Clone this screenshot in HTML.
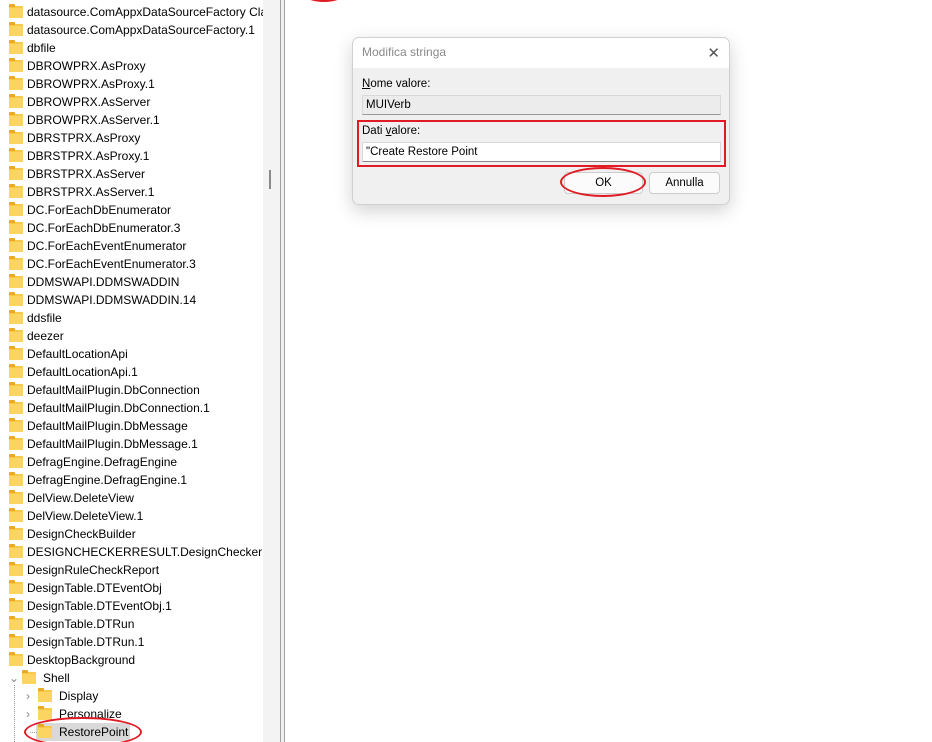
<!DOCTYPE html>
<html><head><meta charset="utf-8"><style>
*{margin:0;padding:0;box-sizing:border-box}
body{width:932px;height:742px;overflow:hidden;background:#fff;font-family:"Liberation Sans",sans-serif;font-size:12px;color:#000;position:relative}
.r{position:absolute;left:0;height:18px;line-height:18px;white-space:nowrap}
.f{position:absolute;top:3px;width:14px;height:12px;background:#f8c84a;border-radius:1px}
.f:before{content:"";position:absolute;left:0;top:-2px;width:6px;height:3px;background:#e9a825;border-radius:1px 1px 0 0}
.f:after{content:"";position:absolute;left:0;top:2px;width:14px;height:10px;background:#fcd462;border-radius:1px}
.t{position:absolute;top:0}
.chev{position:absolute;top:0;color:#888;font-size:12px}
#dlg{font-size:11.5px}
</style></head><body>
<div style="position:absolute;left:0;top:0;width:263px;height:742px;overflow:hidden" id="tree">
</div>
<div style="position:absolute;left:263px;top:0;width:17px;height:742px;background:#f3f3f3"></div>
<div style="position:absolute;left:269px;top:170px;width:2px;height:19px;background:#8a8a8a"></div>
<div style="position:absolute;left:280px;top:0;width:1px;height:742px;background:#a0a0a0"></div>
<div style="position:absolute;left:281px;top:0;width:3px;height:742px;background:#f0f0f0"></div>
<div style="position:absolute;left:284px;top:0;width:1px;height:742px;background:#a0a0a0"></div>
<div style="position:absolute;left:306px;top:-10px;width:36px;height:12px;border:2px solid #e01b24;border-radius:50%"></div>

<div id="dlg" style="position:absolute;left:352px;top:37px;width:378px;height:168px;background:#f0f0f0;border:1px solid #d0d0d0;border-radius:7px;box-shadow:0 6px 18px rgba(0,0,0,.18);overflow:hidden">
 <div style="height:30px;background:#fff;color:#8a8a8a;font-size:12px;line-height:28px;padding-left:9px">Modifica stringa</div>
 <div style="position:absolute;right:9px;top:6px;color:#555;font-size:15px">✕</div>
 <div style="position:absolute;left:9px;top:40px"><u>N</u>ome valore:</div>
 <div style="position:absolute;left:9px;top:57px;width:359px;height:20px;background:#ececec;border:1px solid #d8d8d8;border-bottom-color:#999;line-height:18px;padding-left:3px">MUIVerb</div>
 <div style="position:absolute;left:4px;top:82px;width:369px;height:47px;border:2px solid #e01b24"></div>
 <div style="position:absolute;left:9px;top:87px">Dati <u>v</u>alore:</div>
 <div style="position:absolute;left:9px;top:104px;width:359px;height:20px;background:#fff;border:1px solid #d8d8d8;border-bottom-color:#888;line-height:18px;padding-left:3px">"Create Restore Point</div>
 <div style="position:absolute;left:211px;top:134px;width:79px;height:22px;background:#fbfbfb;border:1px solid #ccc;border-radius:4px;text-align:center;line-height:20px">OK</div>
 <div style="position:absolute;left:296px;top:134px;width:71px;height:22px;background:#fbfbfb;border:1px solid #ccc;border-radius:4px;text-align:center;line-height:20px">Annulla</div>
 <div style="position:absolute;left:207px;top:129px;width:86px;height:30px;border:2px solid #e01b24;border-radius:50%"></div>
</div>

<script>
var items=["datasource.ComAppxDataSourceFactory Class","datasource.ComAppxDataSourceFactory.1","dbfile","DBROWPRX.AsProxy","DBROWPRX.AsProxy.1","DBROWPRX.AsServer","DBROWPRX.AsServer.1","DBRSTPRX.AsProxy","DBRSTPRX.AsProxy.1","DBRSTPRX.AsServer","DBRSTPRX.AsServer.1","DC.ForEachDbEnumerator","DC.ForEachDbEnumerator.3","DC.ForEachEventEnumerator","DC.ForEachEventEnumerator.3","DDMSWAPI.DDMSWADDIN","DDMSWAPI.DDMSWADDIN.14","ddsfile","deezer","DefaultLocationApi","DefaultLocationApi.1","DefaultMailPlugin.DbConnection","DefaultMailPlugin.DbConnection.1","DefaultMailPlugin.DbMessage","DefaultMailPlugin.DbMessage.1","DefragEngine.DefragEngine","DefragEngine.DefragEngine.1","DelView.DeleteView","DelView.DeleteView.1","DesignCheckBuilder","DESIGNCHECKERRESULT.DesignCheckerResult","DesignRuleCheckReport","DesignTable.DTEventObj","DesignTable.DTEventObj.1","DesignTable.DTRun","DesignTable.DTRun.1","DesktopBackground"];
var h="";
items.forEach(function(s,i){var y=3+i*18;h+='<div class="r" style="top:'+y+'px"><span class="f" style="left:9px"></span><span class="t" style="left:27px">'+s+'</span></div>';});
h+='<div class="r" style="top:669px"><span class="chev" style="left:9px">⌄</span><span class="f" style="left:22px"></span><span class="t" style="left:43px">Shell</span></div>';
h+='<div class="r" style="top:687px"><span class="chev" style="left:26px">›</span><span class="f" style="left:38px"></span><span class="t" style="left:59px">Display</span></div>';
h+='<div class="r" style="top:705px"><span class="chev" style="left:26px">›</span><span class="f" style="left:38px"></span><span class="t" style="left:59px">Personalize</span></div>';
h+='<div class="r" style="top:723px;left:36px;width:94px;background:#d9d9d9"></div>';
h+='<div class="r" style="top:723px"><span class="f" style="left:38px"></span><span class="t" style="left:59px">RestorePoint</span></div>';
h+='<div style="position:absolute;left:14px;top:685px;height:57px;border-left:1px dotted #999"></div>';
h+='<div style="position:absolute;left:30px;top:732px;width:7px;border-top:1px dotted #999"></div>';
h+='<div style="position:absolute;left:24px;top:717px;width:118px;height:30px;border:2px solid #e01b24;border-radius:50%"></div>';
document.getElementById("tree").innerHTML=h;
</script>
</body></html>
